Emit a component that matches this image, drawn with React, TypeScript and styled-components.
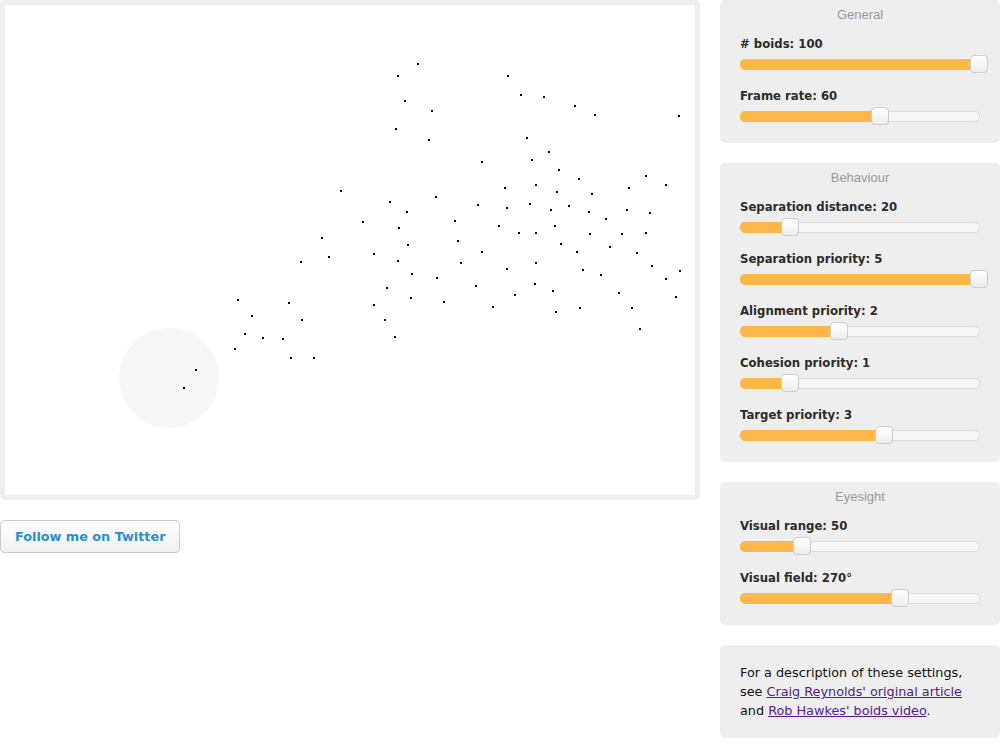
import React from 'react'
import styled, { createGlobalStyle } from 'styled-components'

const GlobalStyle = createGlobalStyle`
    body{
        margin: 0;
        background: #ffffff;
        font-family: "DejaVu Sans", Verdana, sans-serif;
    }
`

const Page = styled.div`
    display: flex;
    align-items: flex-start;
    width: 1000px;
`

const Stage = styled.div`
    display: flex;
    flex-direction: column;
    align-items: flex-start;
    width: 700px;
`

const Canvas = styled.div`
    box-sizing: border-box;
    width: 700px;
    height: 500px;
    border: solid 5px #eeeeee;
    border-radius: 5px;
    background: #ffffff;

    & svg{
        display: block;
    }
`

const TwitterButton = styled.a`
    margin-top: 20px;
    padding: 7.5px 14px;
    border: solid 1px #cccccc;
    border-radius: 4px;
    background: linear-gradient(#ffffff, #f1f1f1);
    color: #2a8fcc;
    font-weight: bold;
    font-size: 12.8px;
    line-height: 16px;
    text-decoration: none;
    cursor: pointer;
`

const Sidebar = styled.div`
    display: flex;
    flex-direction: column;
    gap: 20px;
    width: 280px;
    margin-left: 20px;
`

const Panel = styled.div`
    box-sizing: border-box;
    padding: 7px 20px 21px;
    border-radius: 5px;
    background: #eeeeee;
`

const PanelTitle = styled.div`
    margin-bottom: 13px;
    color: #999999;
    font-family: "Liberation Sans", Arial, sans-serif;
    font-size: 13px;
    line-height: 16px;
    text-align: center;
`

const Row = styled.div`
    margin-bottom: 18px;

    &:last-child{
        margin-bottom: 0;
    }
`

const Label = styled.div`
    margin-bottom: 7px;
    color: #2b2b2b;
    font-weight: bold;
    font-size: 11.7px;
    line-height: 16px;
`

const Track = styled.div`
    position: relative;
    box-sizing: border-box;
    height: 11px;
    border: solid 1px #dddddd;
    border-radius: 5px;
    background: #f6f6f6;
`

const Fill = styled.div`
    position: absolute;
    top: -1px;
    bottom: -1px;
    left: -1px;
    border-radius: 5px 0 0 5px;
    background: #fbb747;
`

const Handle = styled.div`
    position: absolute;
    top: -5px;
    box-sizing: border-box;
    width: 18px;
    height: 18px;
    margin-left: -9px;
    border: solid 1px #cccccc;
    border-radius: 4px;
    background: linear-gradient(#ffffff, #ededed);
`

const InfoPanel = styled.div`
    padding: 18px 20px;
    border-radius: 5px;
    background: #eeeeee;
    color: #111111;
    font-size: 12.8px;
    line-height: 19px;
`

const Link = styled.a`
    color: #551a8b;
    text-decoration: underline;
`

const dots: [number, number][] = [
    [418,64],[398,76],[405,101],[432,111],[396,129],[429,140],
    [508,76],[521,95],[544,97],[575,106],[595,115],[679,116],[527,138],[549,152],[482,162],[532,160],[559,170],[579,179],[646,176],
    [341,191],[390,202],[436,197],[478,205],[407,212],[455,221],[363,222],[399,228],[458,241],[408,245],[322,238],[329,257],[301,262],
    [374,254],[398,261],[461,263],[412,274],[437,278],[476,286],[387,288],[411,298],[444,302],[374,305],[385,320],[395,337],
    [238,300],[289,303],[252,316],[302,320],[245,334],[263,338],[283,339],[235,349],[291,358],[314,358],
    [505,188],[536,185],[557,192],[592,194],[629,188],[666,185],[507,208],[530,204],[551,210],[569,206],[589,212],[627,210],[650,213],
    [606,219],[499,226],[519,233],[536,233],[555,226],[590,234],[622,234],[646,233],[561,244],[610,247],[482,252],[577,252],[637,253],
    [536,263],[507,269],[583,270],[652,266],[680,271],[601,275],[666,279],[535,284],[553,291],[515,295],[619,293],[676,297],
    [493,307],[556,312],[580,308],[632,308],[640,329],
    [196,370],[184,388],
]

type Setting = { label: string, pct: number }

const groups: { title: string, settings: Setting[] }[] = [
    { title: 'General', settings: [
        { label: '# boids: 100', pct: 1 },
        { label: 'Frame rate: 60', pct: 0.585 },
    ]},
    { title: 'Behaviour', settings: [
        { label: 'Separation distance: 20', pct: 0.205 },
        { label: 'Separation priority: 5', pct: 1 },
        { label: 'Alignment priority: 2', pct: 0.41 },
        { label: 'Cohesion priority: 1', pct: 0.205 },
        { label: 'Target priority: 3', pct: 0.6 },
    ]},
    { title: 'Eyesight', settings: [
        { label: 'Visual range: 50', pct: 0.258 },
        { label: 'Visual field: 270°', pct: 0.67 },
    ]},
]

const Slider = ({ pct }: { pct: number }) => (
    <Track>
        <Fill style={{ width: `calc(${pct * 100}% + 1px)` }} />
        <Handle style={{ left: `${pct * 100}%` }} />
    </Track>
)

const App = () => {
  return (
    <Page>
        <GlobalStyle />
        <Stage>
            <Canvas>
                <svg width="690" height="490" viewBox="5 5 690 490">
                    <circle cx="169" cy="378" r="50" fill="#f7f7f7" />
                    {dots.map(([x, y], i) => (
                        <rect key={i} x={x - 1} y={y - 1} width="2" height="2" fill="#000" />
                    ))}
                </svg>
            </Canvas>
            <TwitterButton>Follow me on Twitter</TwitterButton>
        </Stage>
        <Sidebar>
            {groups.map(g => (
                <Panel key={g.title}>
                    <PanelTitle>{g.title}</PanelTitle>
                    {g.settings.map(s => (
                        <Row key={s.label}>
                            <Label>{s.label}</Label>
                            <Slider pct={s.pct} />
                        </Row>
                    ))}
                </Panel>
            ))}
            <InfoPanel>
                For a description of these settings,<br />
                see <Link href="#">Craig Reynolds' original article</Link><br />
                and <Link href="#">Rob Hawkes' boids video</Link>.
            </InfoPanel>
        </Sidebar>
    </Page>
  )
}

export default App
